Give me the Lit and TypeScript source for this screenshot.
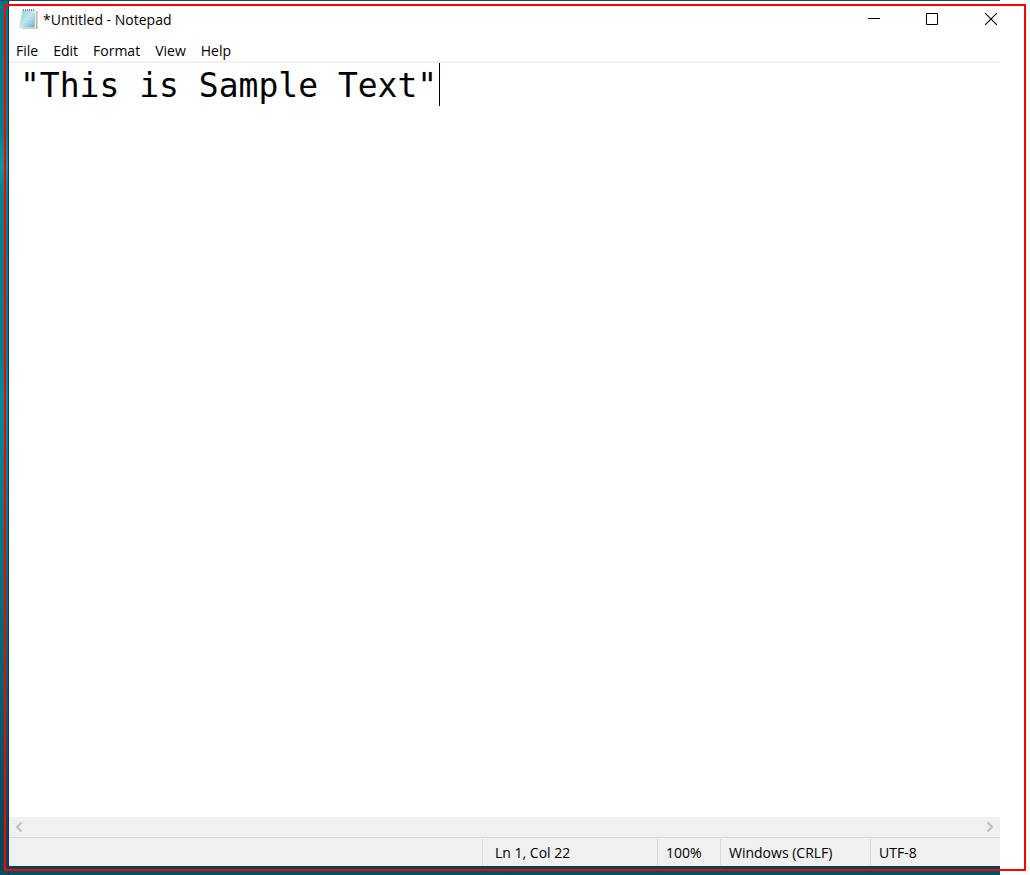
import { LitElement, html, css } from "lit";
import { customElement, state } from "lit/decorators.js";

@customElement("app-root")
class AppRoot extends LitElement {
  @state() text = '"This is Sample Text"';

  private menus = ["File", "Edit", "Format", "View", "Help"];

  static styles = css`
    :host {
      display: block;
      position: relative;
      height: 100vh;
      box-sizing: border-box;
      padding-right: 30px;
      overflow: hidden;
      background: #fff;
      color: #000;
      font: 14px/20px "Open Sans", "Noto Sans", sans-serif;
    }
    .desktop {
      height: 100%;
      box-sizing: border-box;
      padding: 1px 0 9px 9px;
      background:
        linear-gradient(#1c4a5c, #1c4a5c) top / 100% 1px no-repeat,
        linear-gradient(#0b3a47, #0b3a47) 8px 0 / 1px 100% no-repeat,
        linear-gradient(#07404f, #00566a) bottom / 100% 9px no-repeat,
        linear-gradient(#007583, #007f8c 15%, #1695a3 19%, #00828f 22%, #007e8a 40%, #008f9b 45%, #007a86 60%, #00616f 80%, #004a5c 95%);
    }
    .window {
      height: 100%;
      display: flex;
      flex-direction: column;
      background: #fff;
    }
    button {
      font: inherit;
      color: inherit;
      background: none;
      border: 0;
      padding: 0;
      margin: 0;
    }
    svg {
      display: block;
    }
    .title {
      display: flex;
      align-items: center;
      height: 36px;
      margin-right: -21px;
      padding-left: 9px;
    }
    .title h1 {
      flex: 1;
      margin: 0 0 0 4px;
      padding-top: 2px;
      font-size: 14px;
      font-weight: 400;
    }
    .control {
      width: 58px;
      height: 36px;
      display: grid;
      place-items: center;
    }
    .close {
      width: 60px;
    }
    .menu {
      display: flex;
      gap: 15px;
      height: 20px;
      padding: 4px 7px 0;
      border-bottom: 2px solid #f0f0f0;
    }
    .editor {
      position: relative;
      flex: 1;
      min-height: 0;
      font: 33px/42px "DejaVu Sans Mono", monospace;
    }
    textarea {
      display: block;
      width: 100%;
      height: 100%;
      box-sizing: border-box;
      padding: 2px 11px 0;
      border: 0;
      outline: 0;
      resize: none;
      overflow: hidden;
      font: inherit;
      color: inherit;
      background: #fff;
      white-space: pre;
    }
    .caret {
      position: absolute;
      top: 0;
      width: 1px;
      height: 43px;
      margin-left: 13px;
      background: #000;
    }
    .scroll {
      display: flex;
      justify-content: space-between;
      height: 20px;
      background: #f0f0f0;
    }
    .scroll button {
      width: 20px;
      display: grid;
      place-items: center;
    }
    .status {
      display: flex;
      justify-content: flex-end;
      height: 26px;
      padding: 1px 0;
      line-height: 28px;
      border-top: 1px solid #d7d7d7;
      background: #f0f0f0;
    }
    .cell {
      box-sizing: border-box;
      border-left: 1px solid #d7d7d7;
      padding-left: 8px;
      white-space: nowrap;
    }
    .position { width: 175px; padding-left: 12px; }
    .zoom { width: 63px; }
    .ending { width: 150px; }
    .encoding { width: 130px; }
    .frame {
      position: absolute;
      inset: 4px;
      border: 2px solid #f00;
      pointer-events: none;
    }
  `;

  private onInput(e: Event) {
    this.text = (e.target as HTMLTextAreaElement).value;
  }

  render() {
    const lines = this.text.split("\n");
    const col = lines[lines.length - 1].length;
    return html`
      <div class="desktop">
        <main class="window">
          <header class="title">
            <svg width="21" height="22" viewBox="0 0 21 22" aria-hidden="true">
              <defs>
                <linearGradient id="page" x1="0" y1="0" x2="1" y2="1">
                  <stop offset="0" stop-color="#8fc9d9" />
                  <stop offset=".5" stop-color="#c4e9f1" />
                  <stop offset="1" stop-color="#5fa9c0" />
                </linearGradient>
              </defs>
              <path d="M17 3h2.500v18H4z" fill="#b9a98a" />
              <path d="M4.500 2H18.500L18 20.500H1z" fill="#e5f2f5" />
              <path d="M4.500 2.500H17.500L16.500 19.500H1z" fill="url(#page)" />
              <path d="M4 6.500h13M3.500 9.500h13M3 12.500h13M2.500 15.500h13" stroke="#a9d8e3" stroke-width=".5" />
              <path d="M5.500 1v2M7.500 1v2M9.500 1v2M11.500 1v2M13.500 1v2M15.500 1v2" stroke="#7d8b90" stroke-width="1" />
            </svg>
            <h1>*Untitled - Notepad</h1>
            <button class="control" aria-label="Minimize">
              <svg width="12" height="12"><path d="M0 5.500H12" stroke="#000" /></svg>
            </button>
            <button class="control" aria-label="Maximize">
              <svg width="12" height="12"><path d="M.5 .5h11v11H.5z" fill="none" stroke="#000" /></svg>
            </button>
            <button class="control close" aria-label="Close">
              <svg width="12" height="12"><path d="M0 0L12 12M12 0L0 12" stroke="#000" stroke-width="1.1" /></svg>
            </button>
          </header>
          <nav class="menu">${this.menus.map((m) => html`<button>${m}</button>`)}</nav>
          <div class="editor">
            <textarea aria-label="Document text" spellcheck="false" .value=${this.text} @input=${this.onInput}></textarea>
            <span class="caret" style="left:${col}ch"></span>
          </div>
          <div class="scroll">
            <button aria-label="Scroll left">
              <svg width="8" height="10"><path d="M6.500 .5L2 5l4.500 4.500" fill="none" stroke="#bfbfbf" stroke-width="2" /></svg>
            </button>
            <button aria-label="Scroll right">
              <svg width="8" height="10"><path d="M1.500 .5L6 5l-4.500 4.500" fill="none" stroke="#bfbfbf" stroke-width="2" /></svg>
            </button>
          </div>
          <footer class="status">
            <span class="cell position">Ln ${lines.length}, Col ${col + 1}</span>
            <span class="cell zoom">100%</span>
            <span class="cell ending">Windows (CRLF)</span>
            <span class="cell encoding">UTF-8</span>
          </footer>
        </main>
      </div>
      <div class="frame"></div>
    `;
  }
}
